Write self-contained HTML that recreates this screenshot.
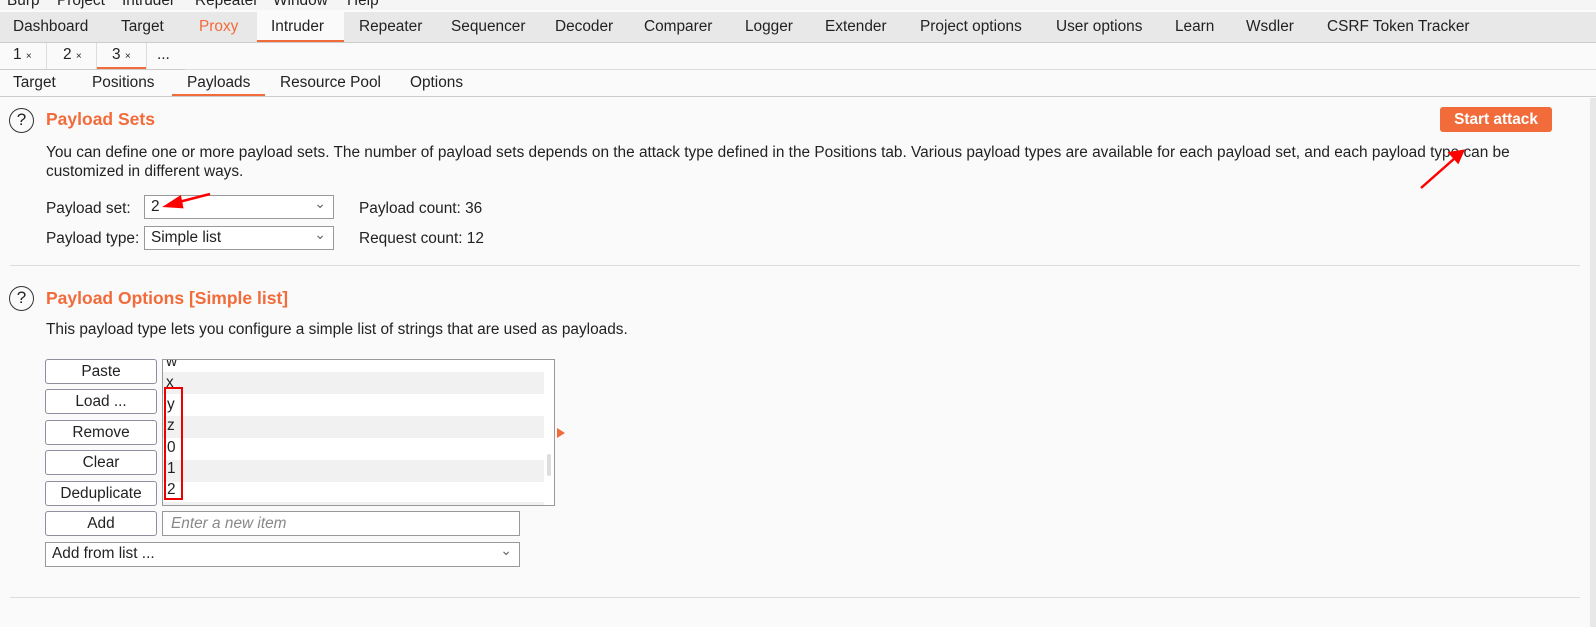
<!DOCTYPE html>
<html><head><meta charset="utf-8"><style>
*{box-sizing:border-box;margin:0;padding:0}
body{width:1596px;height:627px;overflow:hidden;background:#fafafa;font-family:"Liberation Sans","DejaVu Sans",sans-serif;font-size:15.4px;color:#222;position:relative}
.a{position:absolute;white-space:nowrap}
.menu{top:-8px;left:0;height:18px;background:#f5f5f5;width:1596px}
.tabs1{top:12px;left:0;width:1596px;height:31px;background:#e8e8e8;border-bottom:1px solid #ccc}
.tabs2{top:43px;left:0;width:1596px;height:27px;background:#fafafa;border-bottom:1px solid #ddd}
.tabs3{top:70px;left:0;width:1596px;height:27px;background:#fafafa;border-bottom:1px solid #ccc}
.h{color:#f26b3a;font-weight:bold;font-size:17.5px}
.q{width:25px;height:25px;border:1.5px solid #333;border-radius:50%;text-align:center;line-height:22px;font-size:17px}
.btn{position:absolute;left:45px;width:112px;height:25px;border:1px solid #8f8f9f;border-radius:3px;background:#fff;text-align:center;line-height:23px}
.sel{position:absolute;height:24px;border:1px solid #999;background:#fff;padding-left:6px;line-height:22px}
.sel:after{content:"⌄";position:absolute;right:7px;top:-4px;color:#666;font-size:14px}
.line{position:absolute;left:10px;width:1570px;height:1px;background:#ddd}
</style></head><body>
<div class="a menu"><span style="position:absolute;left:7px;top:0">Burp</span><span style="position:absolute;left:57px;top:0">Project</span><span style="position:absolute;left:122px;top:0">Intruder</span><span style="position:absolute;left:195px;top:0">Repeater</span><span style="position:absolute;left:273px;top:0">Window</span><span style="position:absolute;left:347px;top:0">Help</span></div>
<div class="a tabs1">
<div class="a" style="left:257px;top:0;width:87px;height:30px;background:#fafafa;border-bottom:2px solid #f26b3a"></div>
<span class="a" style="left:13px;top:6px">Dashboard</span><span class="a" style="left:121px;top:6px">Target</span><span class="a" style="left:199px;top:6px;color:#f26b3a">Proxy</span><span class="a" style="left:271px;top:6px">Intruder</span><span class="a" style="left:359px;top:6px">Repeater</span><span class="a" style="left:451px;top:6px">Sequencer</span><span class="a" style="left:555px;top:6px">Decoder</span><span class="a" style="left:644px;top:6px">Comparer</span><span class="a" style="left:745px;top:6px">Logger</span><span class="a" style="left:825px;top:6px">Extender</span><span class="a" style="left:920px;top:6px">Project options</span><span class="a" style="left:1056px;top:6px">User options</span><span class="a" style="left:1175px;top:6px">Learn</span><span class="a" style="left:1246px;top:6px">Wsdler</span><span class="a" style="left:1327px;top:6px">CSRF Token Tracker</span></div>
<div class="a tabs2">
<div class="a" style="left:46px;top:0;width:1px;height:26px;background:#ddd"></div><div class="a" style="left:96px;top:0;width:1px;height:26px;background:#ddd"></div><div class="a" style="left:146px;top:0;width:1px;height:26px;background:#ddd"></div><div class="a" style="left:97px;top:24px;width:49px;height:2px;background:#f26b3a"></div><div class="a" style="left:0;top:26px;width:185px;height:1px;background:#ccc"></div>
<span class="a" style="left:13px;top:3px">1 <small style="font-size:10px">×</small></span><span class="a" style="left:63px;top:3px">2 <small style="font-size:10px">×</small></span><span class="a" style="left:112px;top:3px">3 <small style="font-size:10px">×</small></span><span class="a" style="left:157px;top:3px">...</span></div>
<div class="a tabs3">
<div class="a" style="left:172px;top:24px;width:93px;height:2px;background:#f26b3a"></div>
<span class="a" style="left:13px;top:4px">Target</span><span class="a" style="left:92px;top:4px">Positions</span><span class="a" style="left:187px;top:4px">Payloads</span><span class="a" style="left:280px;top:4px">Resource Pool</span><span class="a" style="left:410px;top:4px">Options</span></div>
<div class="a" style="left:1590px;top:98px;width:6px;height:529px;background:#e8e8e8"></div>
<div class="a q" style="left:9px;top:108px">?</div>
<div class="a h" style="left:46px;top:109px">Payload Sets</div>
<div class="a" style="left:1440px;top:107px;width:112px;height:25px;background:#f26b3a;border-radius:3px;color:#fff;font-weight:bold;text-align:center;line-height:25px">Start attack</div>
<div class="a" style="left:46px;top:144px">You can define one or more payload sets. The number of payload sets depends on the attack type defined in the Positions tab. Various payload types are available for each payload set, and each payload type can be</div>
<div class="a" style="left:46px;top:163px">customized in different ways.</div>
<div class="a" style="left:46px;top:200px">Payload set:</div>
<div class="sel" style="left:144px;top:195px;width:190px">2</div>
<div class="a" style="left:359px;top:200px">Payload count: 36</div>
<div class="a" style="left:46px;top:230px">Payload type:</div>
<div class="sel" style="left:144px;top:226px;width:190px">Simple list</div>
<div class="a" style="left:359px;top:230px">Request count: 12</div>
<div class="line" style="top:265px"></div>
<div class="a q" style="left:9px;top:286px">?</div>
<div class="a h" style="left:46px;top:288px">Payload Options [Simple list]</div>
<div class="a" style="left:46px;top:321px">This payload type lets you configure a simple list of strings that are used as payloads.</div>
<div class="btn" style="top:359px">Paste</div><div class="btn" style="top:389px">Load ...</div><div class="btn" style="top:420px">Remove</div><div class="btn" style="top:450px">Clear</div><div class="btn" style="top:481px">Deduplicate</div><div class="btn" style="top:511px">Add</div>
<div class="a" style="left:162px;top:359px;width:393px;height:147px;border:1px solid #999;background:#fff;overflow:hidden">
<div class="a" style="left:0;top:12px;width:381px;height:22px;background:#f1f1f1"></div><div class="a" style="left:0;top:56px;width:381px;height:22px;background:#f1f1f1"></div><div class="a" style="left:0;top:100px;width:381px;height:22px;background:#f1f1f1"></div><div class="a" style="left:0;top:142px;width:381px;height:6px;background:#f1f1f1"></div>
<div class="a" style="left:384px;top:94px;width:4px;height:22px;background:#ddd;border-radius:2px"></div>
<span class="a" style="left:3px;top:-7px">w</span><span class="a" style="left:3px;top:14px">x</span><span class="a" style="left:4px;top:36px">y</span><span class="a" style="left:4px;top:57px">z</span><span class="a" style="left:4px;top:79px">0</span><span class="a" style="left:4px;top:100px">1</span><span class="a" style="left:4px;top:121px">2</span>
<div class="a" style="left:1px;top:27px;width:19px;height:113px;border:2px solid #e00"></div></div>
<div class="a" style="left:557px;top:428px;width:0;height:0;border-left:8px solid #f26b3a;border-top:5px solid transparent;border-bottom:5px solid transparent"></div>
<div class="a" style="left:162px;top:511px;width:358px;height:25px;border:1px solid #999;background:#fff;padding-left:8px;line-height:23px;color:#888;font-style:italic">Enter a new item</div>
<div class="sel" style="left:45px;top:542px;width:475px;height:25px">Add from list ...</div>
<div class="line" style="top:597px"></div>
<svg class="a" style="left:0;top:0" width="1596" height="627"><g stroke="#f00" stroke-width="2.5" fill="#f00"><line x1="210" y1="194" x2="175" y2="203"/><polygon points="166,206 180,197 182,207"/><line x1="1421" y1="188" x2="1455" y2="158"/><polygon points="1463,151 1450,153 1458,162"/></g></svg>
</body></html>
